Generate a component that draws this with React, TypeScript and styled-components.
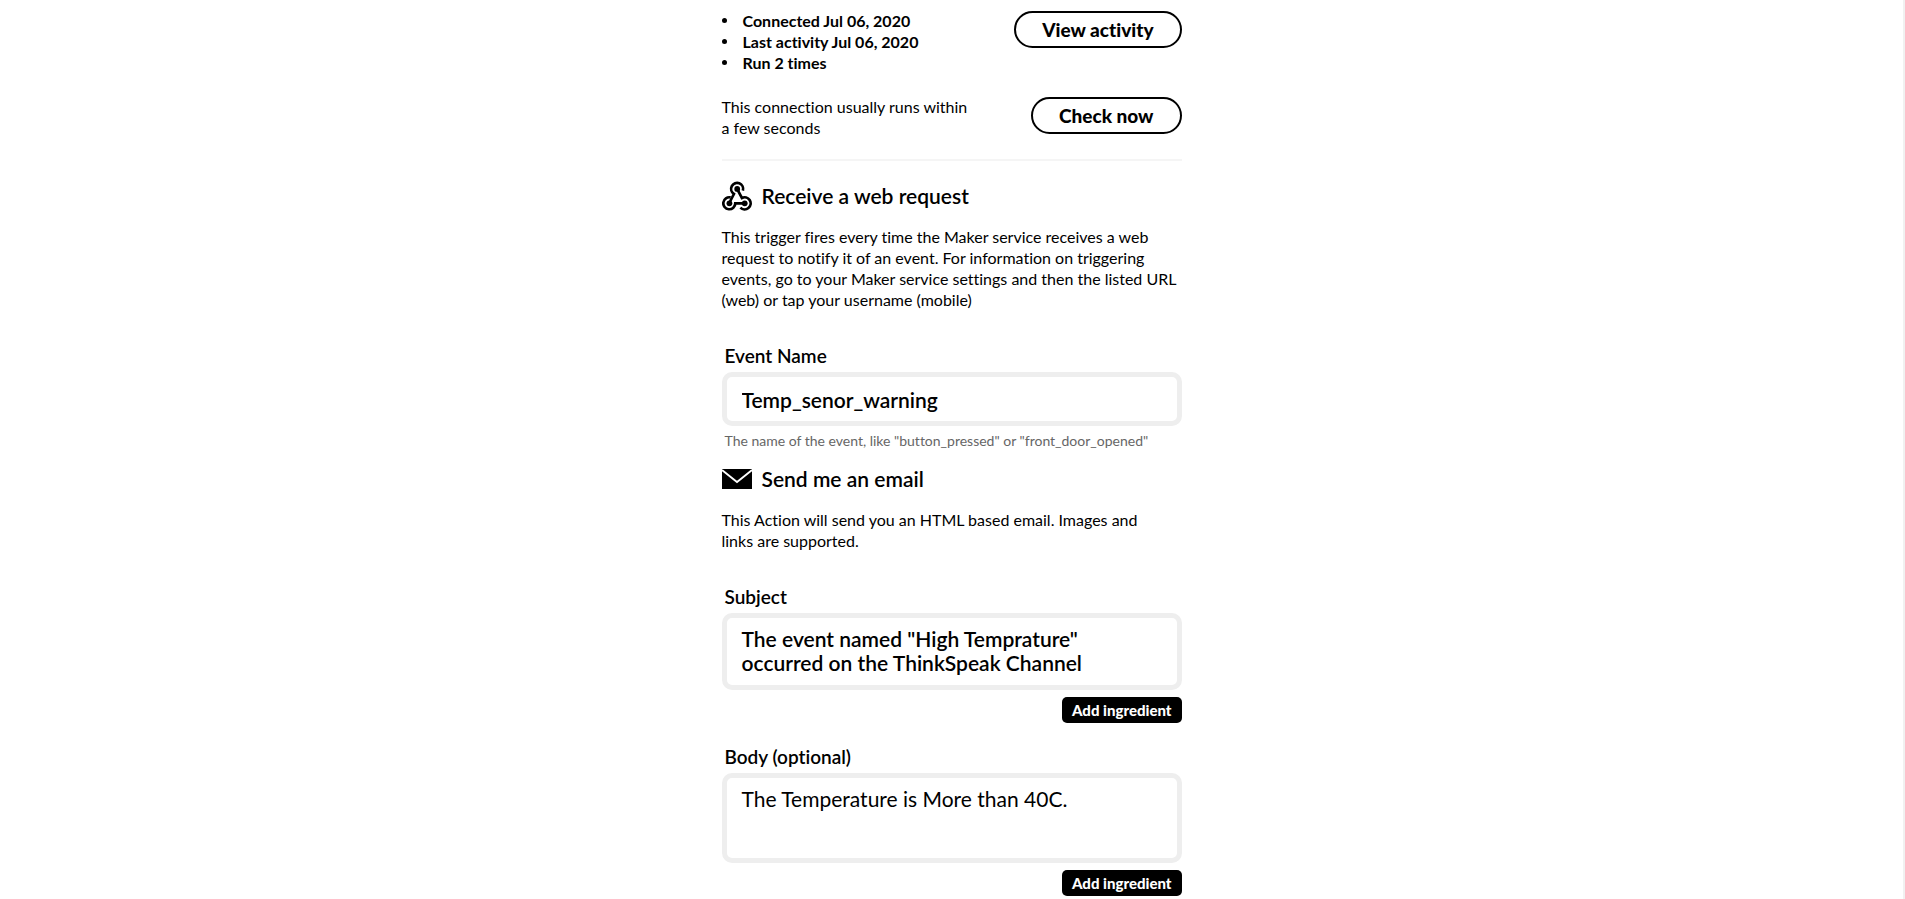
import React from "react";
import styled, { createGlobalStyle, css } from "styled-components";

const GlobalStyle = createGlobalStyle`
  * { box-sizing: border-box; }
  body {
    margin: 0;
    background: #fff;
    color: #000;
    font-family: Lato, "Open Sans", sans-serif;
    font-size: 16px;
    line-height: 21px;
    font-variant-ligatures: none;
  }
`;

const Page = styled.div`
  min-height: 100vh;
  border-right: 2px solid #f1f1f1;
  padding: 10px 0 3px;
`;

const Column = styled.main`
  width: 100%;
  max-width: 460px;
  margin: 0 auto;
`;

const Summary = styled.header`
  display: flex;
  flex-direction: column;
  gap: 23px;
`;

const SummaryRow = styled.div`
  display: flex;
  justify-content: space-between;
  align-items: flex-start;
`;

const StatusList = styled.ul`
  margin: 0;
  padding: 0;
  list-style: none;
  font-weight: 700;
`;

const StatusItem = styled.li`
  display: flex;
  align-items: center;
  gap: 16px;

  &::before {
    content: "";
    width: 5px;
    height: 5px;
    border-radius: 50%;
    background: #000;
  }
`;

const Note = styled.p`
  margin: 0;
  max-width: 252px;
`;

const PillButton = styled.button`
  height: 37px;
  margin: 1px 0 0;
  padding: 0 26px;
  border: 2px solid #000;
  border-radius: 19px;
  background: #fff;
  color: #000;
  font: 900 19px/24px Lato, sans-serif;
  font-variant-ligatures: none;
  cursor: pointer;
`;

const Divider = styled.hr`
  margin: 21px 0 20px;
  border: 0;
  border-top: 2px solid #f5f5f5;
`;

const SectionTitle = styled.h2`
  display: flex;
  align-items: center;
  gap: 10px;
  height: 30px;
  margin: 0 0 15px;
  font-size: 21px;
  line-height: 24px;
  font-weight: 600;
`;

const Description = styled.p`
  margin: 0 0 34px;
`;

const Field = styled.div<{ $gap: number }>`
  display: flex;
  flex-direction: column;
  margin-bottom: ${(p) => p.$gap}px;
`;

const Label = styled.label`
  margin-bottom: 4px;
  padding-left: 3px;
  font-size: 19px;
  line-height: 24px;
  font-weight: 600;
`;

const control = css`
  width: 100%;
  border: 5px solid #eee;
  border-radius: 10px;
  background: #fff;
  color: #000;
  font: 600 21px/24px Lato, sans-serif;
  font-variant-ligatures: none;
  outline: none;
`;

const TextInput = styled.input`
  ${control}
  height: 54px;
  padding: 0 15px;
`;

const TextArea = styled.textarea<{ $height: number; $weight: number }>`
  ${control}
  display: block;
  height: ${(p) => p.$height}px;
  padding: 9px 15px;
  font-weight: ${(p) => p.$weight};
  resize: none;
  overflow: hidden;
`;

const Hint = styled.p`
  margin: 6px 0 0;
  padding-left: 3px;
  font-size: 14px;
  line-height: 18px;
  color: #666;
`;

const IngredientButton = styled.button`
  align-self: flex-end;
  height: 26px;
  margin-top: 7px;
  padding: 0 10px;
  border: 0;
  border-radius: 5px;
  background: #000;
  color: #fff;
  font: 900 15px/18px Lato, sans-serif;
  font-variant-ligatures: none;
  cursor: pointer;
`;

const WebhookIcon = () => (
  <svg width="30" height="30" viewBox="0 0 30 30" fill="none" stroke="#000" aria-hidden="true">
    <g strokeWidth="2.7">
      <path d="M20.9 9.6A6 6 0 1 0 11.9 13L7.8 21" />
      <path d="M8.6 16.4A6 6 0 1 0 13.3 22.4H22" />
      <path d="M15.2 8.2L19.9 17A6 6 0 1 1 18.4 26.6" />
    </g>
    <g fill="#000" stroke="none">
      <circle cx="15.2" cy="7.9" r="2.9" />
      <circle cx="7.4" cy="22.3" r="2.9" />
      <circle cx="22.7" cy="22.3" r="2.9" />
    </g>
  </svg>
);

const MailIcon = () => (
  <svg width="30" height="22" viewBox="0 0 30 22" aria-hidden="true">
    <path d="M0 1h30v20H0z" />
    <path d="M0 2L15 14L30 2" fill="none" stroke="#fff" strokeWidth="1.8" />
  </svg>
);

export default function App() {
  return (
    <>
      <GlobalStyle />
      <Page>
        <Column>
          <Summary>
            <SummaryRow>
              <StatusList>
                <StatusItem>Connected Jul 06, 2020</StatusItem>
                <StatusItem>Last activity Jul 06, 2020</StatusItem>
                <StatusItem>Run 2 times</StatusItem>
              </StatusList>
              <PillButton type="button">View activity</PillButton>
            </SummaryRow>
            <SummaryRow>
              <Note>This connection usually runs within a few seconds</Note>
              <PillButton type="button">Check now</PillButton>
            </SummaryRow>
          </Summary>
          <Divider />

          <SectionTitle>
            <WebhookIcon />
            Receive a web request
          </SectionTitle>
          <Description>
            This trigger fires every time the Maker service receives a web request to notify it of an
            event. For information on triggering events, go to your Maker service settings and then
            the listed URL (web) or tap your username (mobile)
          </Description>
          <Field $gap={14}>
            <Label htmlFor="event-name">Event Name</Label>
            <TextInput id="event-name" defaultValue="Temp_senor_warning" />
            <Hint>The name of the event, like "button_pressed" or "front_door_opened"</Hint>
          </Field>

          <SectionTitle>
            <MailIcon />
            Send me an email
          </SectionTitle>
          <Description>
            This Action will send you an HTML based email. Images and
            <br />
            links are supported.
          </Description>
          <Field $gap={22}>
            <Label htmlFor="subject">Subject</Label>
            <TextArea
              id="subject"
              $height={77}
              $weight={600}
              defaultValue={'The event named "High Temprature" occurred on the ThinkSpeak Channel'}
            />
            <IngredientButton type="button">Add ingredient</IngredientButton>
          </Field>
          <Field $gap={0}>
            <Label htmlFor="body">Body (optional)</Label>
            <TextArea
              id="body"
              $height={90}
              $weight={400}
              defaultValue="The Temperature is More than 40C."
            />
            <IngredientButton type="button">Add ingredient</IngredientButton>
          </Field>
        </Column>
      </Page>
    </>
  );
}
